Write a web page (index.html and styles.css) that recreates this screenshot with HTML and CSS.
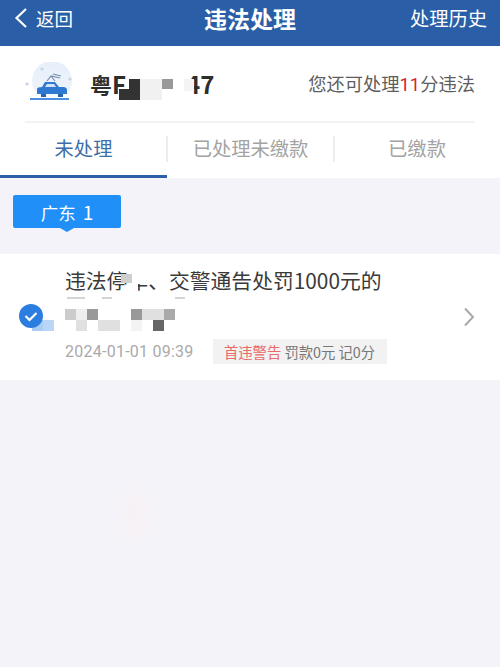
FILE: index.html
```html
<!DOCTYPE html>
<html lang="zh">
<head>
<meta charset="utf-8">
<title>违法处理</title>
<link rel="stylesheet" href="styles.css">
</head>
<body>
<div class="page">
  <header class="topbar">
    <div class="back">
      <svg class="back-icon" viewBox="0 0 16 22" width="16" height="22"><path d="M13 2 L3.5 11 L13 20" fill="none" stroke="#fff" stroke-width="2.2"/></svg>
      <span>返回</span>
    </div>
    <h1 class="title">违法处理</h1>
    <div class="history">处理历史</div>
  </header>

  <section class="summary">
    <div class="vehicle">
      <div class="plate-group">
        <svg class="car" viewBox="0 0 52 44" width="52" height="44">
          <defs>
            <linearGradient id="halo" x1="0" y1="0" x2="0" y2="1">
              <stop offset="0" stop-color="#e6effa"/>
              <stop offset="0.7" stop-color="#edf3fb"/>
              <stop offset="1" stop-color="#ffffff"/>
            </linearGradient>
          </defs>
          <circle cx="27" cy="19" r="20" fill="url(#halo)"/>
          <circle cx="17" cy="7" r="1.6" fill="#c5d3e6"/>
          <circle cx="45" cy="17" r="1.6" fill="#c5d3e6"/>
          <circle cx="2" cy="22" r="1.6" fill="#c5d3e6"/>
          <path d="M22 19 L26 14 L35 16 M28 12 L36 14 M26 14 L30 19" stroke="#7a8ea8" stroke-width="1.2" fill="none"/>
          <path d="M17 25 L20 20 H30 L34 25 H39 Q42 25.5 42 28 V32 H12 V27 Q12 25 17 25 Z" fill="#2f7ad0"/>
          <path d="M20 25 L22 22 H29 L31 25 Z" fill="#d5e5f7"/>
          <rect x="16" y="32" width="5" height="3" fill="#2a64ac"/>
          <rect x="33" y="32" width="5" height="3" fill="#2a64ac"/>
          <rect x="5" y="36" width="39" height="2" fill="#4a90e0"/>
        </svg>
        <div class="plate">
          <span class="plate-prov">粤</span><span>F</span>
          <div class="plate-mosaic">
            <i class="p0"></i><i class="p1"></i><i class="p2"></i><i class="p3"></i><i class="p4"></i>
          </div>
          <span>47</span>
        </div>
      </div>
      <div class="quota">您还可处理<em>11</em>分违法</div>
    </div>
    <nav class="tabs">
      <div class="tab active">未处理</div>
      <div class="tab">已处理未缴款</div>
      <div class="tab">已缴款</div>
    </nav>
  </section>

  <div class="region-row">
    <div class="region">广东 <span class="region-num">1</span></div>
  </div>

  <article class="card">
    <div class="status">
      <svg viewBox="0 0 36 28" width="36" height="28">
        <rect x="13" y="16" width="11" height="11" fill="#a9ccf5"/>
        <rect x="24" y="16" width="11" height="11" fill="#b9d6f8"/>
        <circle cx="12" cy="12" r="12" fill="#2b7de0"/>
        <path d="M6.5 12 L10.5 16 L17.5 9" fill="none" stroke="#fff" stroke-width="2.2"/>
      </svg>
    </div>
    <div class="body">
      <div class="violation">违法停<span class="censored">车</span>、交警通告处罚1000元的</div>
      <div class="slivers"><i class="sl-a"></i><i class="sl-b"></i><i class="sl-c"></i></div>
      <div class="mosaic">
        <i class="s3"></i><i class="s5"></i><i class="s1"></i><i></i><i></i><i></i><i class="s1"></i><i class="s4"></i><i class="s4"></i><i class="s2"></i>
        <i></i><i class="s4"></i><i></i><i class="s4"></i><i class="s4"></i><i></i><i class="s0"></i><i></i><i class="s6"></i><i></i>
      </div>
      <div class="meta">
        <span class="date">2024-01-01 09:39</span>
        <span class="badge"><b>首违警告</b> 罚款0元 记0分</span>
      </div>
    </div>
    <svg class="chevron" viewBox="0 0 12 20" width="12" height="20"><path d="M2 1.5 L10 10 L2 18.5" fill="none" stroke="#a9a9a9" stroke-width="2"/></svg>
  </article>
  <div class="blob"></div>
</div>
</body>
</html>
```

FILE: styles.css
```css
* { box-sizing: border-box; }
html, body { margin: 0; padding: 0; }
body {
  width: 500px;
  height: 667px;
  overflow: hidden;
  background: #f4f3f9;
  font-family: "Noto Sans CJK SC", Roboto, sans-serif;
  color: #333;
}
.page { display: flex; flex-direction: column; height: 667px; position: relative; }

.topbar {
  height: 46px;
  flex: none;
  background: #2a5fa8;
  color: #fff;
  display: grid;
  grid-template-columns: 1fr auto 1fr;
  align-items: center;
  padding: 0 13px 10px 13px;
}
.back { display: flex; align-items: center; gap: 7px; font-size: 18.5px; line-height: 22px; }
.back-icon { display: block; }
.title { margin: 0; font-size: 23px; line-height: 30px; font-weight: 700; }
.history { justify-self: end; font-size: 19.3px; line-height: 24px; }

.summary { background: #fff; height: 132px; flex: none; display: flex; flex-direction: column; }
.vehicle {
  height: 77px;
  margin: 0 25px 0 25px;
  border-bottom: 2px solid #f3f3f4;
  display: flex;
  align-items: center;
  justify-content: space-between;
}
.plate-group { display: flex; align-items: center; gap: 13px; }
.car { display: block; margin-top: 1px; }
.plate { display: flex; align-items: center; font-size: 24px; line-height: 30px; font-weight: 700; color: #2d2d2d; }
.plate-prov { font-size: 22px; }
.plate-mosaic {
  position: relative;
  z-index: 1;
  display: flex;
  flex: none;
  width: 67px;
  height: 21px;
  margin: 12px 0 0 -7px;
  align-items: flex-start;
}
.plate-mosaic i { display: block; flex: none; }
.plate-mosaic .p0 { background: #333; width: 10px; height: 11px; margin-top: 10px; }
.plate-mosaic .p1 { background: #333; width: 11px; height: 21px; }
.plate-mosaic .p2 { background: #f1f1f1; width: 22px; height: 21px; }
.plate-mosaic .p3 { background: #999; width: 11px; height: 10px; }
.plate-mosaic .p4 { background: #f4f4f4; width: 10px; height: 12px; margin-left: 11px; }
.quota { font-size: 18.3px; line-height: 24px; color: #5e5e5e; }
.quota em { font-style: normal; color: #d8202f; font-family: Roboto, sans-serif; }

.tabs { display: grid; grid-template-columns: 167px 167px 166px; height: 55px; }
.tab {
  display: flex;
  align-items: center;
  justify-content: center;
  font-size: 19.3px;
  color: #a3a3a3;
  position: relative;
  padding-bottom: 5px;
}
.tab + .tab::before {
  content: "";
  position: absolute;
  left: -1px;
  top: 13px;
  width: 2px;
  height: 26px;
  background: #ededed;
}
.tab.active { color: #3c6ea8; border-bottom: 3px solid #2a5fa8; padding-bottom: 2px; }

.region-row { padding: 17px 0 0 13px; height: 76px; flex: none; }
.region {
  position: relative;
  width: 108px;
  height: 33px;
  background: #2090f8;
  border-radius: 2px;
  color: #fff;
  font-size: 17.5px;
  line-height: 33px;
  text-align: center;
}
.region-num { margin-left: 3px; font-size: 19px; }
.region::after {
  content: "";
  position: absolute;
  left: 47px;
  bottom: -4px;
  border-left: 7px solid transparent;
  border-right: 7px solid transparent;
  border-top: 4px solid #2090f8;
}

.card {
  height: 126px;
  flex: none;
  background: #fff;
  display: flex;
  align-items: flex-start;
  position: relative;
}
.status { width: 65px; padding: 50px 0 0 19px; flex: none; }
.status svg { display: block; }
.body { flex: 1; padding-top: 11px; }
.violation { font-size: 20.8px; line-height: 30px; height: 30px; color: #3a3a3a; white-space: nowrap; }
.censored { position: relative; }
.censored::before {
  content: "";
  position: absolute;
  z-index: 2;
  left: -6px;
  top: 9px;
  width: 11px;
  height: 9px;
  background: #cfcfcf;
}
.censored::after {
  content: "";
  position: absolute;
  z-index: 1;
  left: 0;
  top: 0;
  width: 21px;
  height: 30px;
  background:
    linear-gradient(#fff, #fff) 0 0 / 21px 19px no-repeat,
    linear-gradient(#fff, #fff) 0 0 / 11px 30px no-repeat;
}
.slivers { display: flex; height: 14px; padding: 2px 0 0 2px; align-items: flex-start; }
.slivers i { display: block; height: 2px; background: #d4d4d4; }
.sl-a { width: 18px; }
.sl-b { width: 10px; margin-left: 17px; }
.sl-c { width: 10px; margin-left: 63px; }
.mosaic { display: grid; grid-template-columns: repeat(10, 11px); grid-auto-rows: 11px; width: 110px; }
.mosaic i { display: block; }
.s0 { background: #f3f3f3; }
.s1 { background: #999; }
.s2 { background: #aaa; }
.s3 { background: #ccc; }
.s4 { background: #e0e0e0; }
.s5 { background: #eee; }
.s6 { background: #666; }

.meta { display: flex; align-items: center; gap: 20px; margin-top: 8px; height: 25px; }
.date { font-family: Roboto, sans-serif; font-size: 16px; color: #aaa; white-space: nowrap; letter-spacing: 0.25px; flex: none; width: 128px; }
.badge {
  background: #f2f2f2;
  height: 25px;
  width: 174px;
  padding-left: 11px;
  font-size: 14.3px;
  line-height: 25px;
  color: #777;
  white-space: nowrap;
}
.badge b { font-weight: 400; color: #e86a6a; }
.chevron { position: absolute; left: 463px; top: 53px; display: block; }
.blob {
  position: absolute;
  left: 110px;
  top: 480px;
  width: 50px;
  height: 70px;
  border-radius: 50%;
  background: radial-gradient(closest-side, #f8f1f4, rgba(248, 241, 244, 0));
}
```
